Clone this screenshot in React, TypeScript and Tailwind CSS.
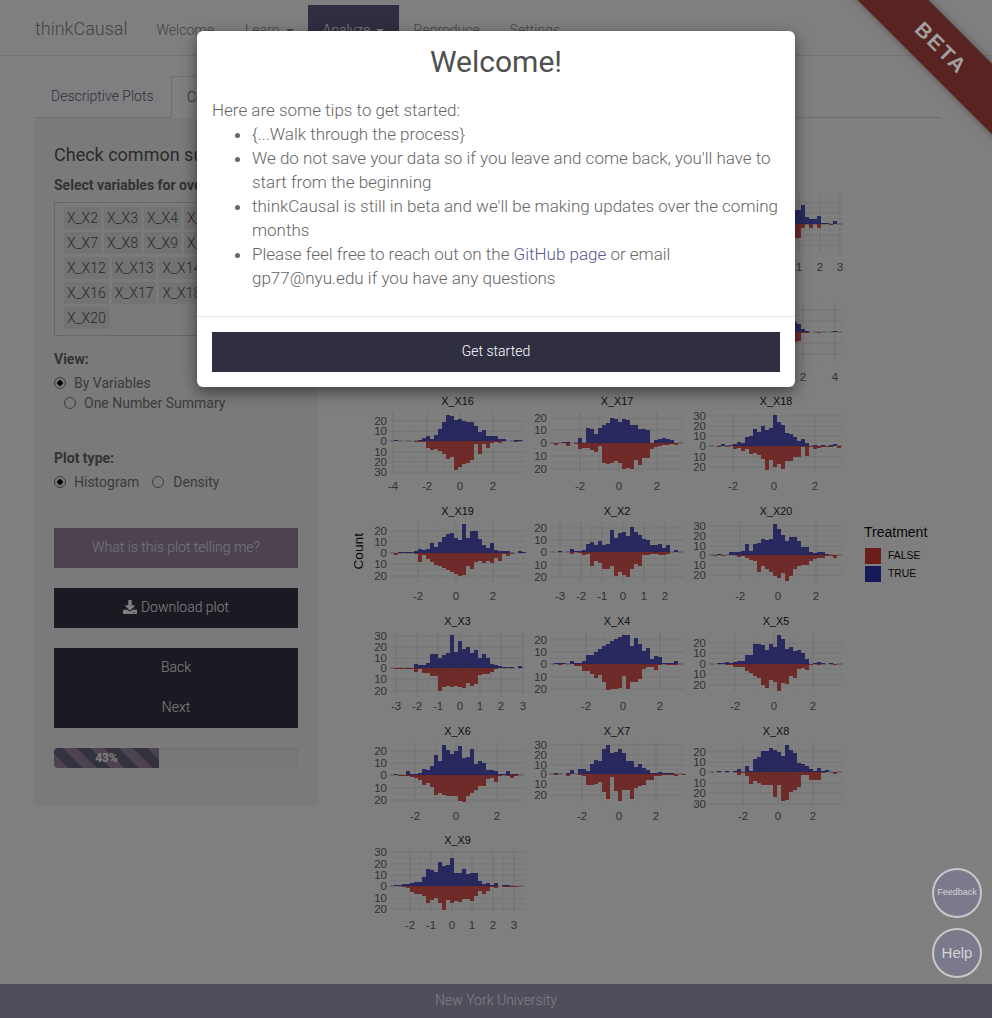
import { FaDownload } from "react-icons/fa"

type PlotData = {
    title: string
    left: number
    top: number
    bottom: number
    zero: number
    yTicks: [string, number][]
    xTicks: [string, number][]
    up: number[]
    down: number[]
}

// the first two rows sit behind the modal, only the right edge of their last plot shows
const plots: (PlotData | null)[] = [
    null,
    null,
    {
        title: "", left: 25, top: 21, bottom: 81, zero: 52,
        yTicks: [["", 30], ["", 41], ["", 52], ["", 63], ["", 74]],
        xTicks: [["", 52], ["", 94], ["1", 115], ["2", 136], ["3", 156]],
        up: [0, 0, 0, 1, 2, 3, 5, 8, 12, 16, 20, 22, 24, 20, 16, 18, 14, 12, 10, 12, 16, 14, 14, 19, 7, 5, 5, 8, 1, 1, 0, 3, 0, 0],
        down: [0, 0, 0, 1, 2, 3, 5, 8, 12, 16, 20, 22, 24, 20, 16, 18, 14, 12, 10, 12, 16, 14, 14, 4, 0, 4, 0, 4, 0, 0, 1, 0, 0, 0],
    },
    null,
    null,
    {
        title: "", left: 25, top: 21, bottom: 81, zero: 50,
        yTicks: [["", 28], ["", 39], ["", 50], ["", 61], ["", 72]],
        xTicks: [["", 55], ["", 87], ["2", 119], ["4", 151]],
        up: [0, 0, 0, 1, 2, 4, 8, 12, 16, 20, 24, 24, 26, 22, 20, 18, 14, 16, 12, 10, 14, 10, 8, 3, 1, 0, 0, 0, 0, 0, 0, 1, 0, 0],
        down: [0, 0, 0, 1, 2, 4, 8, 12, 16, 20, 24, 24, 26, 22, 20, 18, 14, 16, 12, 10, 14, 10, 9, 1, 1, 0, 0, 1, 0, 0, 0, 0, 0, 0],
    },
    {
        title: "X_X16", left: 24, top: 21, bottom: 81, zero: 50,
        yTicks: [["20", 30], ["10", 40], ["0", 50], ["10", 61], ["20", 71], ["30", 81]],
        xTicks: [["-4", 27], ["-2", 61], ["0", 94], ["2", 127]],
        up: [0, 1, 0, 0, 0, 0, 0, 1, 3, 5, 2, 6, 12, 19, 26, 25, 21, 22, 20, 19, 19, 15, 9, 11, 5, 5, 5, 2, 2, 0, 0, 1, 1, 0],
        down: [0, 0, 0, 0, 0, 0, 1, 1, 1, 7, 9, 8, 10, 13, 18, 16, 29, 26, 23, 22, 19, 3, 13, 3, 7, 2, 1, 2, 0, 0, 0, 1, 0, 0],
    },
    {
        title: "X_X17", left: 25, top: 21, bottom: 81, zero: 52,
        yTicks: [["20", 27], ["10", 39], ["0", 52], ["10", 65], ["20", 78]],
        xTicks: [["-2", 55], ["0", 94], ["2", 132]],
        up: [0, 0, 0, 1, 1, 0, 0, 5, 0, 15, 14, 9, 15, 18, 20, 25, 24, 21, 24, 23, 18, 18, 14, 14, 13, 0, 3, 4, 5, 4, 3, 0, 0, 0],
        down: [0, 2, 0, 0, 3, 0, 1, 6, 5, 5, 7, 9, 3, 20, 21, 20, 18, 20, 26, 25, 26, 17, 22, 15, 15, 6, 4, 3, 2, 2, 1, 2, 0, 0],
    },
    {
        title: "X_X18", left: 25, top: 22, bottom: 81, zero: 55,
        yTicks: [["30", 25], ["20", 35], ["10", 45], ["0", 55], ["10", 66], ["20", 76]],
        xTicks: [["-2", 49], ["0", 90], ["2", 131]],
        up: [0, 0, 0, 2, 0, 1, 2, 4, 3, 9, 10, 17, 14, 20, 16, 18, 31, 24, 21, 13, 12, 9, 5, 7, 3, 0, 1, 0, 1, 0, 1, 2, 0, 0],
        down: [0, 0, 1, 0, 1, 0, 3, 2, 5, 3, 8, 7, 9, 13, 24, 14, 21, 18, 23, 15, 15, 11, 11, 1, 10, 1, 3, 2, 1, 1, 1, 0, 2, 0],
    },
    {
        title: "X_X19", left: 24, top: 21, bottom: 81, zero: 52,
        yTicks: [["20", 30], ["10", 41], ["0", 52], ["10", 63], ["20", 75]],
        xTicks: [["-2", 52], ["0", 90], ["2", 127]],
        up: [0, 0, 1, 1, 1, 1, 2, 4, 3, 4, 10, 6, 11, 16, 19, 20, 15, 13, 29, 15, 22, 22, 14, 8, 5, 10, 3, 2, 2, 2, 0, 0, 2, 1],
        down: [0, 2, 0, 0, 0, 0, 1, 9, 2, 6, 9, 12, 13, 15, 17, 19, 21, 23, 22, 13, 16, 9, 8, 10, 8, 10, 5, 8, 1, 3, 1, 0, 0, 0],
    },
    {
        title: "X_X2", left: 25, top: 21, bottom: 80, zero: 51,
        yTicks: [["20", 27], ["10", 39], ["0", 51], ["10", 64], ["20", 76]],
        xTicks: [["-3", 35], ["-2", 56], ["-1", 77], ["0", 98], ["1", 119], ["2", 140]],
        up: [0, 0, 1, 0, 0, 3, 1, 1, 2, 8, 10, 7, 11, 7, 8, 22, 14, 19, 20, 16, 25, 20, 17, 13, 12, 7, 7, 8, 4, 7, 0, 2, 0, 0],
        down: [0, 0, 0, 0, 0, 2, 0, 1, 3, 2, 14, 9, 11, 17, 17, 14, 24, 20, 23, 25, 17, 12, 14, 3, 3, 2, 2, 3, 3, 2, 0, 0, 0, 0],
    },
    {
        title: "X_X20", left: 25, top: 21, bottom: 80, zero: 54,
        yTicks: [["30", 25], ["20", 35], ["10", 45], ["0", 54], ["10", 64], ["20", 74]],
        xTicks: [["-2", 56], ["0", 94], ["2", 132]],
        up: [0, 0, 1, 0, 0, 3, 3, 3, 4, 11, 4, 11, 12, 16, 15, 16, 31, 26, 20, 14, 18, 18, 14, 8, 8, 3, 2, 3, 3, 1, 0, 0, 0, 0],
        down: [0, 1, 0, 1, 0, 0, 0, 2, 1, 3, 5, 6, 17, 11, 14, 17, 21, 23, 18, 26, 21, 14, 11, 10, 10, 6, 4, 3, 3, 1, 1, 3, 0, 0],
    },
    {
        title: "X_X3", left: 24, top: 22, bottom: 83, zero: 57,
        yTicks: [["30", 25], ["20", 36], ["10", 47], ["0", 57], ["10", 68], ["20", 80]],
        xTicks: [["-3", 30], ["-2", 51], ["-1", 72], ["0", 94], ["1", 114], ["2", 135], ["3", 157]],
        up: [0, 0, 0, 0, 0, 0, 4, 3, 3, 5, 14, 14, 10, 13, 15, 33, 16, 27, 19, 21, 15, 18, 10, 14, 10, 4, 3, 2, 1, 1, 1, 0, 2, 0],
        down: [0, 1, 1, 1, 1, 1, 4, 1, 5, 5, 8, 8, 23, 19, 18, 19, 18, 19, 20, 15, 18, 16, 7, 6, 6, 4, 1, 0, 0, 0, 0, 0, 0, 0],
    },
    {
        title: "X_X4", left: 25, top: 21, bottom: 79, zero: 53,
        yTicks: [["20", 29], ["10", 41], ["0", 53], ["10", 66], ["20", 78]],
        xTicks: [["-2", 61], ["0", 98], ["2", 135]],
        up: [0, 1, 1, 1, 0, 3, 1, 1, 3, 9, 9, 12, 15, 18, 20, 23, 25, 27, 29, 29, 18, 26, 20, 13, 16, 5, 8, 7, 1, 1, 1, 3, 0, 0],
        down: [0, 0, 1, 0, 0, 0, 2, 2, 7, 7, 10, 14, 11, 18, 26, 25, 25, 24, 12, 25, 18, 18, 15, 5, 3, 3, 6, 1, 0, 1, 1, 1, 0, 0],
    },
    {
        title: "X_X5", left: 25, top: 22, bottom: 80, zero: 53,
        yTicks: [["20", 32], ["10", 42], ["0", 53], ["10", 63], ["20", 74]],
        xTicks: [["-2", 51], ["0", 90], ["2", 129]],
        up: [0, 0, 1, 1, 2, 1, 2, 3, 3, 9, 9, 20, 20, 19, 14, 20, 17, 29, 25, 15, 17, 13, 14, 11, 5, 0, 1, 2, 1, 0, 1, 0, 0, 0],
        down: [0, 0, 0, 0, 1, 1, 3, 3, 3, 7, 9, 12, 14, 21, 24, 16, 18, 27, 19, 20, 12, 14, 5, 4, 6, 1, 0, 1, 0, 0, 0, 1, 0, 0],
    },
    {
        title: "X_X6", left: 24, top: 22, bottom: 81, zero: 54,
        yTicks: [["20", 30], ["10", 42], ["0", 54], ["10", 67], ["20", 79]],
        xTicks: [["-2", 49], ["0", 90], ["2", 131]],
        up: [0, 1, 0, 0, 4, 1, 1, 2, 6, 5, 9, 20, 14, 30, 25, 21, 24, 29, 17, 18, 26, 11, 14, 12, 5, 5, 4, 1, 1, 4, 1, 1, 0, 0],
        down: [0, 0, 1, 1, 1, 2, 3, 5, 10, 8, 12, 20, 18, 20, 21, 21, 21, 26, 27, 21, 18, 15, 11, 11, 4, 3, 7, 1, 0, 1, 3, 1, 0, 0],
    },
    {
        title: "X_X7", left: 25, top: 22, bottom: 80, zero: 53,
        yTicks: [["30", 24], ["20", 34], ["10", 44], ["0", 53], ["10", 63], ["20", 74]],
        xTicks: [["-2", 57], ["0", 94], ["2", 131]],
        up: [0, 1, 0, 0, 1, 4, 0, 5, 5, 3, 10, 14, 13, 25, 29, 21, 22, 25, 21, 13, 13, 7, 10, 6, 4, 1, 1, 2, 1, 1, 1, 0, 0, 0],
        down: [0, 1, 0, 0, 2, 0, 0, 1, 2, 11, 11, 10, 8, 18, 25, 3, 17, 27, 16, 16, 25, 14, 12, 11, 6, 6, 2, 2, 1, 1, 1, 2, 0, 1],
    },
    {
        title: "X_X8", left: 25, top: 22, bottom: 83, zero: 51,
        yTicks: [["20", 31], ["10", 41], ["0", 51], ["10", 62], ["20", 72], ["30", 83]],
        xTicks: [["-2", 59], ["0", 94], ["2", 129]],
        up: [0, 0, 1, 0, 1, 0, 1, 3, 0, 6, 1, 13, 15, 21, 21, 24, 22, 20, 16, 27, 22, 19, 9, 8, 6, 3, 1, 4, 1, 2, 0, 0, 0, 0],
        down: [0, 0, 0, 0, 0, 0, 0, 3, 1, 4, 12, 9, 11, 13, 13, 13, 25, 13, 29, 28, 20, 18, 15, 3, 3, 8, 8, 8, 1, 0, 0, 2, 0, 0],
    },
    {
        title: "X_X9", left: 24, top: 21, bottom: 82, zero: 56,
        yTicks: [["30", 22], ["20", 34], ["10", 45], ["0", 56], ["10", 68], ["20", 79]],
        xTicks: [["-2", 44], ["-1", 65], ["0", 86], ["1", 106], ["2", 127], ["3", 148]],
        up: [0, 1, 1, 2, 2, 3, 4, 4, 9, 17, 16, 14, 24, 20, 21, 28, 13, 13, 17, 12, 13, 13, 5, 2, 3, 1, 3, 0, 1, 1, 0, 0, 0, 0],
        down: [0, 0, 0, 1, 2, 6, 8, 8, 10, 17, 14, 12, 17, 24, 14, 17, 15, 16, 13, 13, 15, 10, 5, 8, 5, 1, 2, 0, 1, 1, 1, 1, 0, 0],
    },
]

const tagNames = [2, 3, 4, 5, 6, 7, 8, 9, 10, 11, 12, 13, 14, 15, 16, 17, 18, 19, 20]

const radio = "appearance-none shrink-0 w-[12px] h-[12px] rounded-full border border-[#777] bg-[#f5f5f5] checked:bg-[radial-gradient(circle,#000_0,#000_2.5px,#f5f5f5_3px)]"

const Plot = ({ p }: { p: PlotData }) => {
    const right = 159
    const mid = (a: number, b: number) => (a + b) / 2
    const ys = p.yTicks.map((t) => t[1])
    const xs = p.xTicks.map((t) => t[1])
    return (
        <svg width={159} height={109.75} className="block overflow-visible">
            {p.title && <text x={(p.left + right) / 2} y={14} textAnchor="middle" fontSize={10.8} fill="#222" fontFamily="Liberation Sans">{p.title}</text>}
            {ys.slice(1).map((y, i) => (
                <line key={i} x1={p.left} x2={right} y1={mid(ys[i], y)} y2={mid(ys[i], y)} stroke="#ececec" strokeWidth={0.6} />
            ))}
            {xs.slice(1).map((x, i) => (
                <line key={i} x1={mid(xs[i], x)} x2={mid(xs[i], x)} y1={p.top} y2={p.bottom} stroke="#ececec" strokeWidth={0.6} />
            ))}
            {ys.map((y, i) => <line key={i} x1={p.left} x2={right} y1={y} y2={y} stroke="#e6e6e6" strokeWidth={1.1} />)}
            {xs.map((x, i) => <line key={i} x1={x} x2={x} y1={p.top} y2={p.bottom} stroke="#e6e6e6" strokeWidth={1.1} />)}
            <line x1={p.left} x2={right} y1={p.zero} y2={p.zero} stroke="#b0b0b0" strokeWidth={1} strokeDasharray="5 3" />
            {p.up.map((h, i) => h > 0 && (
                <rect key={i} x={p.left + i * 4} y={p.zero - h} width={4} height={h} fill="#3234b4" fillOpacity={0.85} />
            ))}
            {p.down.map((h, i) => h > 0 && (
                <rect key={i} x={p.left + i * 4} y={p.zero} width={4} height={h} fill="#d63a36" fillOpacity={0.85} />
            ))}
            {p.yTicks.map(([label, y], i) => label && (
                <text key={i} x={p.left - 3} y={y + 4} textAnchor="end" fontSize={11.5} fill="#666" fontFamily="Liberation Sans">{label}</text>
            ))}
            {p.xTicks.map(([label, x], i) => label && (
                <text key={i} x={x} y={98.5} textAnchor="middle" fontSize={11.5} fill="#666" fontFamily="Liberation Sans">{label}</text>
            ))}
        </svg>
    )
}

const Navbar = () => (
    <nav className="flex h-[56px] items-stretch border-b border-[#e7e7e7] pl-[35px] font-light text-[14px] text-[#888]">
        <a className="text-[18px] leading-[48px] mt-[5px] text-[#888] mr-[14px]">thinkCausal</a>
        <a className="px-[15px] pt-[15px] mt-[5px]">Welcome</a>
        <a className="px-[15px] pt-[15px] mt-[5px] ml-[1px] flex items-start gap-[6px]">Learn<span className="mt-[9px] border-x-4 border-t-4 border-x-transparent border-t-[#888]" /></a>
        <a className="px-[15px] pt-[15px] mt-[5px] bg-[#605c85] text-white flex items-start gap-[6px] mb-[1px] w-[91px] ml-[-1px]">Analyze<span className="mt-[9px] border-x-4 border-t-4 border-x-transparent border-t-white" /></a>
        <a className="px-[15px] pt-[15px] mt-[5px]">Reproduce</a>
        <a className="px-[15px] pt-[15px] mt-[5px]">Settings</a>
    </nav>
)

const Sidebar = () => (
    <div className="w-[282px] h-[688px] shrink-0 bg-[#f5f5f5] px-[19px] pt-[27px] text-[#777]">
        <h3 className="text-[18px] leading-[20px] text-[#555] whitespace-nowrap mb-[10px]">Check common support</h3>
        <p className="text-[14px] leading-[20px] font-bold text-[#666] whitespace-nowrap mb-[7px]">Select variables for overlap plots</p>
        <div className="border border-[#ccc] bg-[#f5f5f5] pl-[9px] pr-[9px] pt-[4px] h-[134px] flex flex-wrap content-start gap-x-[3px] gap-y-[3px] text-[14px] font-light text-[#555]">
            {tagNames.map((n) => (
                <span key={n} className="bg-[#e6e6e6] px-[3px] h-[22px] leading-[22px]">X_X{n}</span>
            ))}
        </div>
        <p className="text-[14px] leading-[20px] font-bold text-[#666] mt-[13px] mb-[4px]">View:</p>
        <label className="flex items-center h-[20px] text-[14px] text-[#777]"><input type="radio" name="view" defaultChecked className={`${radio} mr-[8px]`} />By Variables</label>
        <label className="flex items-center h-[20px] pl-[10px] text-[14px] text-[#777]"><input type="radio" name="view" className={`${radio} mr-[8px]`} />One Number Summary</label>
        <p className="text-[14px] leading-[20px] font-bold text-[#666] mt-[35px] mb-[4px]">Plot type:</p>
        <div className="flex gap-[13px] text-[14px] text-[#777]">
            <label className="flex items-center h-[20px]"><input type="radio" name="kind" defaultChecked className={`${radio} mr-[8px]`} />Histogram</label>
            <label className="flex items-center h-[20px]"><input type="radio" name="kind" className={`${radio} mr-[9px]`} />Density</label>
        </div>
        <button className="mt-[36px] block w-full h-[40px] pb-[2px] bg-[#9a86a0] text-white/80 text-[14px] font-light">What is this plot telling me?</button>
        <button className="mt-[20px] flex items-center justify-center gap-[4px] w-full h-[40px] pb-[2px] bg-[#343444] text-white text-[14px] font-light"><FaDownload className="text-[14px]" />Download plot</button>
        <div className="mt-[20px] bg-[#343444] text-white text-[14px] font-light">
            <button className="block w-full h-[40px] pb-[2px]">Back</button>
            <button className="block w-full h-[40px] pb-[2px]">Next</button>
        </div>
        <div className="mt-[20px] h-[20px] rounded-[4px] bg-[#f0f0f0] shadow-[inset_0_1px_2px_rgba(0,0,0,0.1)] overflow-hidden">
            <div className="h-full w-[43%] bg-[repeating-linear-gradient(45deg,#9a86a0_0,#9a86a0_10px,#68647e_10px,#68647e_20px)] text-center text-[12px] leading-[20px] font-bold text-white">43%</div>
        </div>
    </div>
)

const PlotArea = () => (
    <div className="flex h-[860px] mt-[3px] ml-[33px]">
        <div className="w-[16px] flex items-center justify-center shrink-0">
            <span className="[writing-mode:vertical-rl] rotate-180 text-[13.7px] text-[#111] font-['Liberation_Sans'] ml-[2px]">Count</span>
        </div>
        <div className="w-[477px] shrink-0 mt-[50.75px] grid grid-cols-[159px_159px_159px] auto-rows-[109.75px] self-start">
            {plots.map((p, i) => (p ? <Plot key={i} p={p} /> : <div key={i} />))}
        </div>
        <div className="ml-[21px] flex flex-col justify-center font-['Liberation_Sans'] shrink-0 w-[80px] pt-[5px]">
            <p className="text-[14px] leading-[16px] text-[#111] mb-[7px]">Treatment</p>
            <div className="flex items-center gap-[7px] pl-[1px] text-[10.4px] text-[#111] h-[18px]"><span className="w-[16px] h-[16px] bg-[#d63a36]" />FALSE</div>
            <div className="flex items-center gap-[7px] pl-[1px] text-[10.4px] text-[#111] h-[18px]"><span className="w-[16px] h-[16px] bg-[#3234b4]" />TRUE</div>
        </div>
    </div>
)

const Modal = () => (
    <div className="absolute inset-0 z-10 bg-black/50 flex justify-center items-start pt-[31px]">
        <div className="w-[598px] h-[356px] bg-white rounded-[6px] shadow-[0_5px_15px_rgba(0,0,0,0.5)] flex flex-col">
            <h4 className="text-[30px] leading-[33px] text-[#4f4f4f] text-center pt-[14px] h-[67px]">Welcome!</h4>
            <div className="px-[15px] pb-[26px] font-light text-[17px] leading-[24px] text-[#666]">
                <p>Here are some tips to get started:</p>
                <ul className="list-disc pl-[40px]">
                    <li>{"{...Walk through the process}"}</li>
                    <li>We do not save your data so if you leave and come back, you'll have to start from the beginning</li>
                    <li>thinkCausal is still in beta and we'll be making updates over the coming months</li>
                    <li>Please feel free to reach out on the <a className="text-[#5a5590]">GitHub page</a> or email gp77@nyu.edu if you have any questions</li>
                </ul>
            </div>
            <div className="border-t border-[#e5e5e5] p-[15px]">
                <button className="block w-full h-[40px] pb-[2px] bg-[#302f42] text-white text-[14px] font-light">Get started</button>
            </div>
        </div>
    </div>
)

export default function App() {
    return (
        <div className="relative h-[1018px] w-[992px] overflow-hidden bg-white font-['Roboto',sans-serif] flex flex-col">
            <Navbar />
            <main className="flex-1 pl-[35px] pr-[51px] pt-[20px]">
                <div className="flex h-[42px] border-b border-[#ddd] text-[14px] font-light">
                    <a className="px-[15px] ml-[1px] mr-[2px] leading-[40px] text-[#605c85] w-[133px] whitespace-nowrap">Descriptive Plots</a>
                    <a className="px-[15px] leading-[40px] h-[42px] bg-white border border-[#ddd] border-b-white text-[#555] whitespace-nowrap">Common Support Plots</a>
                </div>
                <div className="flex">
                    <Sidebar />
                    <PlotArea />
                </div>
            </main>
            <footer className="h-[34px] bg-[#9e9cb8] text-center leading-[32px] text-[14px] font-light text-white">New York University</footer>
            <Modal />
            <div className="absolute z-20 left-[831px] top-[23px] w-[220px] h-[50px] rotate-45 bg-[#582320] shadow-[0_0_8px_rgba(0,0,0,0.35)] flex items-center justify-center text-[21px] font-bold tracking-[2px] text-[#a0a0a0] font-['Liberation_Sans']">BETA</div>
            <button className="absolute z-20 left-[932px] top-[868px] w-[50px] h-[50px] rounded-full border-2 border-[#c8c8c8] bg-[#7b7a8c] text-[#d4d4d4] text-[9px] font-['Liberation_Sans']">Feedback</button>
            <button className="absolute z-20 left-[932px] top-[928px] w-[50px] h-[50px] rounded-full border-2 border-[#c8c8c8] bg-[#7b7a8c] text-[#d4d4d4] text-[15px] font-['Liberation_Sans']">Help</button>
        </div>
    )
}
